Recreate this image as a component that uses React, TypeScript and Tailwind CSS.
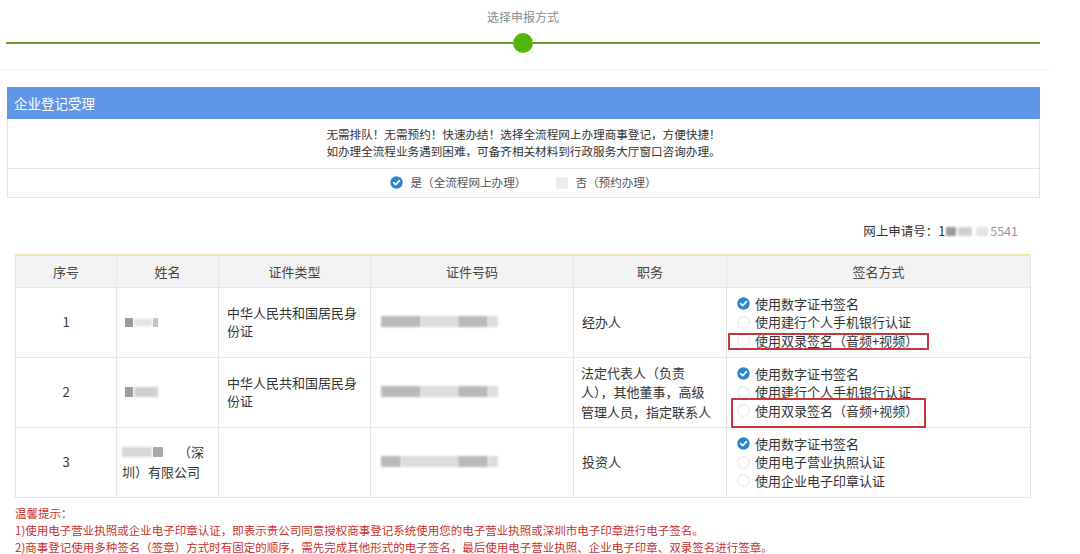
import React from "react";

const FONT = { fontFamily: '"Noto Sans CJK SC", "Noto Sans", "Liberation Sans", sans-serif' };

function Checked() {
  return (
    <svg width="13" height="13" viewBox="0 0 13 13" className="shrink-0">
      <circle cx="6.5" cy="6.5" r="6.2" fill="#2a86d1" />
      <path d="M3.6 6.7 L5.7 8.6 L9.4 4.6" fill="none" stroke="#fff" strokeWidth="1.7" strokeLinecap="round" strokeLinejoin="round" />
    </svg>
  );
}

function Unchecked() {
  return (
    <svg width="13" height="13" viewBox="0 0 13 13" className="shrink-0">
      <circle cx="6.5" cy="6.5" r="5.8" fill="#fff" stroke="#e2e2e2" strokeWidth="1" />
    </svg>
  );
}

function Blur({ w, dark = false }: { w: number; dark?: boolean }) {
  return (
    <span
      className={`inline-block h-[11px] blur-[1px] ${dark ? "bg-[#b9b9b9]" : "bg-[#dcdcdc]"}`}
      style={{ width: w }}
    />
  );
}

function Option({ checked, label }: { checked?: boolean; label: string }) {
  return (
    <div className="flex items-center gap-[5px] h-[18.5px]">
      {checked ? <Checked /> : <Unchecked />}
      <span>{label}</span>
    </div>
  );
}

export default function App() {
  return (
    <div className="w-[1080px] h-[554px] overflow-hidden bg-white text-[#333]" style={FONT}>
      {/* Step indicator */}
      <div className="h-[70px] border-b border-[#f2f2f2] w-[1050px]">
        <div className="pl-[6px] w-[1040px]">
          <div className="pt-[8px] text-center text-[12px] leading-[18px] text-[#8a8a8a]">选择申报方式</div>
          <div className="mt-[7px] flex items-center h-[20px]">
            <div className="flex-1 h-[2px] bg-[#6c9c2c]" />
            <div className="w-[20px] h-[20px] rounded-full bg-[#52b608]" />
            <div className="flex-1 h-[2px] bg-[#6c9c2c]" />
          </div>
        </div>
      </div>

      {/* Panel */}
      <div className="ml-[7px] mt-[17px] w-[1033px]">
        <div className="h-[32px] bg-[#5f96e8] flex items-center pl-[7px] text-white text-[13.5px]">企业登记受理</div>
        <div className="border border-t-0 border-[#e4e4e4]">
          <div className="h-[49px] pt-[7px] text-center text-[11.6px] leading-[17px] text-[#333]">
            <div>无需排队！无需预约！快速办结！选择全流程网上办理商事登记，方便快捷！</div>
            <div>如办理全流程业务遇到困难，可备齐相关材料到行政服务大厅窗口咨询办理。</div>
          </div>
          <div className="h-[29px] border-t border-[#e4e4e4] flex items-center justify-center text-[11.6px] text-[#555]">
            <div className="flex items-center gap-[7px]">
              <Checked />
              <span>是（全流程网上办理）</span>
            </div>
            <div className="flex items-center gap-[7px] ml-[30px]">
              <span className="inline-block w-[12px] h-[12px] rounded-[3px] bg-[#ececec]" />
              <span>否（预约办理）</span>
            </div>
          </div>
        </div>
      </div>

      {/* Application number */}
      <div className="mt-[25px] w-[1018px] flex justify-end items-center text-[12.5px] leading-[16px] text-[#333]">
        <span>网上申请号：1</span>
        <span className="inline-block w-[10px] h-[9px] bg-[#9a9a9a] blur-[1px] ml-[1px]" />
        <span className="inline-block w-[14px] h-[9px] bg-[#d0d0d0] blur-[1px] ml-[2px]" />
        <span className="inline-block w-[12px] h-[9px] bg-[#e4e4e4] blur-[1px] ml-[4px]" />
        <span className="text-[#999] ml-[2px]">5541</span>
      </div>

      {/* Table */}
      <div className="ml-[15px] mt-[15px] w-[1015px]">
        <table className="w-full border-collapse table-fixed text-[13px] text-[#333]">
          <colgroup>
            <col className="w-[101px]" />
            <col className="w-[102px]" />
            <col className="w-[152px]" />
            <col className="w-[203px]" />
            <col className="w-[153px]" />
            <col className="w-[304px]" />
          </colgroup>
          <thead>
            <tr className="h-[32px] bg-[#f3f3f3] border-t-2 border-[#f1e7ae]">
              {["序号", "姓名", "证件类型", "证件号码", "职务", "签名方式"].map((h) => (
                <th key={h} className="font-normal text-center border-x border-[#e6e6e6] text-[#444]">{h}</th>
              ))}
            </tr>
          </thead>
          <tbody>
            <tr className="h-[70px]">
              <td className="border border-[#e6e6e6] text-center">1</td>
              <td className="border border-[#e6e6e6] pl-[8px]">
                <span className="inline-flex items-center gap-[1px]">
                  <span className="inline-block w-[8px] h-[9px] bg-[#9a9a9a] blur-[0.5px]" />
                  <span className="inline-block w-[18px] h-[7px] bg-[#e2e2e2] blur-[1px]" />
                  <span className="inline-block w-[5px] h-[9px] bg-[#c4c4c4] blur-[0.5px]" />
                </span>
              </td>
              <td className="border border-[#e6e6e6] px-[8px] leading-[18px]">中华人民共和国居民身份证</td>
              <td className="border border-[#e6e6e6] pl-[10px]">
                <span className="inline-flex items-center gap-0">
                  <Blur w={40} dark />
                  <Blur w={37} />
                  <Blur w={30} dark />
                  <Blur w={10} />
                </span>
              </td>
              <td className="border border-[#e6e6e6] pl-[8px]">经办人</td>
              <td className="border border-[#e6e6e6] pl-[10px]">
                <div className="flex flex-col">
                  <Option checked label="使用数字证书签名" />
                  <Option label="使用建行个人手机银行认证" />
                  <div className="relative">
                    <Option label="使用双录签名（音频+视频）" />
                    <div className="absolute left-[-9px] top-[2px] w-[201px] h-[17px] border-2 border-[#c9373a]" />
                  </div>
                </div>
              </td>
            </tr>
            <tr className="h-[70px]">
              <td className="border border-[#e6e6e6] text-center">2</td>
              <td className="border border-[#e6e6e6] pl-[8px]">
                <span className="inline-flex items-center gap-[1px]">
                  <span className="inline-block w-[8px] h-[10px] bg-[#9a9a9a] blur-[0.5px]" />
                  <span className="inline-block w-[24px] h-[10px] bg-[#cfcfcf] blur-[1px]" />
                </span>
              </td>
              <td className="border border-[#e6e6e6] px-[8px] leading-[18px]">中华人民共和国居民身份证</td>
              <td className="border border-[#e6e6e6] pl-[10px]">
                <span className="inline-flex items-center gap-0">
                  <Blur w={40} dark />
                  <Blur w={37} />
                  <Blur w={30} dark />
                  <Blur w={10} />
                </span>
              </td>
              <td className="border border-[#e6e6e6] px-[7px] leading-[19.5px] whitespace-nowrap">
                <div>法定代表人（负责</div>
                <div>人），其他董事，高级</div>
                <div>管理人员，指定联系人</div>
              </td>
              <td className="border border-[#e6e6e6] pl-[10px]">
                <div className="flex flex-col">
                  <Option checked label="使用数字证书签名" />
                  <Option label="使用建行个人手机银行认证" />
                  <div className="relative">
                    <Option label="使用双录签名（音频+视频）" />
                    <div className="absolute left-[-6px] top-[-3px] w-[195px] h-[30px] border-2 border-[#c9373a]" />
                  </div>
                </div>
              </td>
            </tr>
            <tr className="h-[70px]">
              <td className="border border-[#e6e6e6] text-center">3</td>
              <td className="border border-[#e6e6e6] pl-[5px] pr-[14px] leading-[20px]">
                <div className="flex items-center justify-between">
                  <span className="inline-flex items-center gap-[1px]">
                    <span className="inline-block w-[30px] h-[10px] bg-[#d8d8d8] blur-[1px]" />
                    <span className="inline-block w-[10px] h-[10px] bg-[#a9a9a9] blur-[0.5px]" />
                  </span>
                  <span>（深</span>
                </div>
                <div>圳）有限公司</div>
              </td>
              <td className="border border-[#e6e6e6]"></td>
              <td className="border border-[#e6e6e6] pl-[10px]">
                <span className="inline-flex items-center gap-0">
                  <Blur w={20} dark />
                  <Blur w={57} />
                  <Blur w={30} dark />
                  <Blur w={10} />
                </span>
              </td>
              <td className="border border-[#e6e6e6] pl-[8px]">投资人</td>
              <td className="border border-[#e6e6e6] pl-[10px]">
                <div className="flex flex-col">
                  <Option checked label="使用数字证书签名" />
                  <Option label="使用电子营业执照认证" />
                  <Option label="使用企业电子印章认证" />
                </div>
              </td>
            </tr>
          </tbody>
        </table>
      </div>

      {/* Tips */}
      <div className="ml-[15px] mt-[7px] text-[11.5px] leading-[17px] text-[#c9302c]">
        <div>温馨提示：</div>
        <div>1)使用电子营业执照或企业电子印章认证，即表示贵公司同意授权商事登记系统使用您的电子营业执照或深圳市电子印章进行电子签名。</div>
        <div>2)商事登记使用多种签名（签章）方式时有固定的顺序，需先完成其他形式的电子签名，最后使用电子营业执照、企业电子印章、双录签名进行签章。</div>
      </div>
    </div>
  );
}
